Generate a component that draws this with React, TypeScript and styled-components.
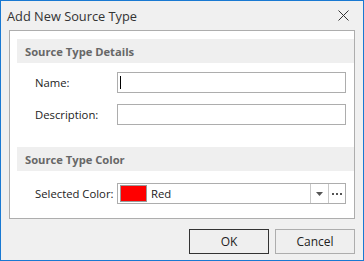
import React from 'react';
import styled, { createGlobalStyle } from 'styled-components';

const GlobalStyle = createGlobalStyle`
  html, body {
    margin: 0;
    padding: 0;
    background: #f0f0f0;
  }
  * {
    box-sizing: border-box;
  }
`;

const Window = styled.div`
  width: 364px;
  height: 261px;
  border: 1px solid #1979d2;
  background: #f0f0f0;
  font-family: 'Open Sans', 'Noto Sans', sans-serif;
  display: flex;
  flex-direction: column;
`;

const TitleBar = styled.div`
  height: 29px;
  display: flex;
  align-items: center;
  justify-content: space-between;
  padding: 0 14px 0 6px;
  font-size: 12.8px;
  color: #333333;
`;

const CloseButton = styled.div`
  width: 12px;
  height: 12px;
  display: flex;
  align-items: center;
  justify-content: center;
`;

const Panel = styled.div`
  margin: 0 8px 0 8px;
  height: 189px;
  border: 1px solid #adadad;
  background: #ffffff;
  padding: 8px 0 0 7px;
`;

const SectionHeader = styled.div<{ $top?: number }>`
  height: 24px;
  margin-top: ${p => p.$top ?? 0}px;
  background: #efefef;
  display: flex;
  align-items: center;
  padding-left: 8px;
  font-size: 11.2px;
  font-weight: 700;
  color: #676767;
`;

const FieldRow = styled.div<{ $top: number }>`
  display: flex;
  align-items: center;
  margin-top: ${p => p.$top}px;
  padding-left: 18px;
`;

const Label = styled.div`
  width: 82px;
  font-size: 11.3px;
  color: #222222;
`;

const TextBox = styled.div`
  width: 229px;
  height: 21px;
  border: 1px solid #adadad;
  background: #fff;
  display: flex;
  align-items: center;
  padding-left: 2px;
`;

const Caret = styled.div`
  width: 1px;
  height: 13px;
  background: #000;
`;

const ComboBox = styled.div`
  width: 229px;
  height: 21px;
  border: 1px solid #adadad;
  background: #fff;
  display: flex;
  align-items: stretch;
`;

const ComboValue = styled.div`
  flex: 1;
  display: flex;
  align-items: center;
  gap: 4px;
  padding-left: 2px;
  font-size: 11.3px;
  color: #222222;
`;

const Swatch = styled.div<{ $color: string }>`
  width: 27px;
  height: 17px;
  border: 1px solid #9a9a9a;
  background: ${p => p.$color};
`;

const ComboButton = styled.div<{ $width: number }>`
  width: ${p => p.$width}px;
  border-left: 1px solid #c8c8c8;
  display: flex;
  align-items: center;
  justify-content: center;
`;

const Footer = styled.div`
  display: flex;
  justify-content: flex-end;
  gap: 6px;
  padding: 10px 8px 0 0;
`;

const Button = styled.div<{ $default?: boolean }>`
  width: 80px;
  height: 25px;
  border: 1px solid ${p => (p.$default ? '#333333' : '#adadad')};
  background: #efefef;
  display: flex;
  align-items: center;
  justify-content: center;
  font-size: 12px;
  color: #222222;
`;

export default function App() {
  return (
    <>
      <GlobalStyle />
      <Window>
        <TitleBar>
          <span>Add New Source Type</span>
          <CloseButton>
            <svg width="11" height="11" viewBox="0 0 11 11">
              <path d="M0.5 0.5 L10.5 10.5 M10.5 0.5 L0.5 10.5" stroke="#333" strokeWidth="1" />
            </svg>
          </CloseButton>
        </TitleBar>

        <Panel>
          <SectionHeader>Source Type Details</SectionHeader>
          <FieldRow $top={9}>
            <Label>Name:</Label>
            <TextBox>
              <Caret />
            </TextBox>
          </FieldRow>
          <FieldRow $top={11}>
            <Label>Description:</Label>
            <TextBox />
          </FieldRow>

          <SectionHeader $top={22}>Source Type Color</SectionHeader>
          <FieldRow $top={12}>
            <Label>Selected Color:</Label>
            <ComboBox>
              <ComboValue>
                <Swatch $color="#ff0000" />
                Red
              </ComboValue>
              <ComboButton $width={18}>
                <svg width="7" height="4" viewBox="0 0 7 4">
                  <path d="M0 0 L7 0 L3.5 4 Z" fill="#555" />
                </svg>
              </ComboButton>
              <ComboButton $width={17}>
                <svg width="10" height="2" viewBox="0 0 10 2">
                  <rect x="0" y="0" width="2" height="2" fill="#555" />
                  <rect x="4" y="0" width="2" height="2" fill="#555" />
                  <rect x="8" y="0" width="2" height="2" fill="#555" />
                </svg>
              </ComboButton>
            </ComboBox>
          </FieldRow>
        </Panel>

        <Footer>
          <Button $default>OK</Button>
          <Button>Cancel</Button>
        </Footer>
      </Window>
    </>
  );
}
